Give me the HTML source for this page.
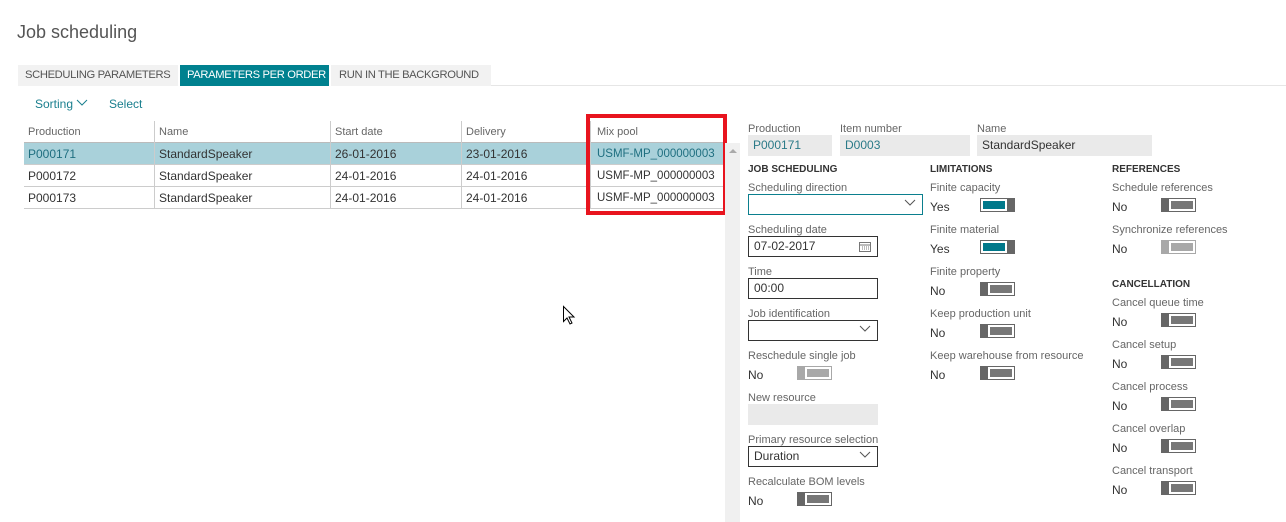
<!DOCTYPE html>
<html><head><meta charset="utf-8"><style>
*{margin:0;padding:0;box-sizing:border-box}
body{width:1286px;height:522px;background:#fff;font-family:"Liberation Sans",sans-serif;font-size:12px;color:#333;position:relative;overflow:hidden}
.a{position:absolute;white-space:nowrap;line-height:16px}
.lbl{color:#666;font-size:11px}
.h{font-weight:bold;font-size:10px;color:#333}
.tg{position:absolute;width:35px;height:14px;background:#666}
.tg i{position:absolute;top:1px;width:26px;height:12px;background:#fff}
.tg i b{position:absolute;left:2px;top:2px;width:22px;height:8px;background:#777}
.no i{left:8px}.yes i{left:1px}.yes i b{background:#00788a}
.dis{background:#a8a8a8}.dis i b{background:#a8a8a8}
.box{position:absolute;height:21px;border:1px solid #333;background:#fff;padding-left:5px;line-height:19px}
.gr{position:absolute;height:21px;background:#eaeaea;padding-left:5px;line-height:21px;color:#2a7a88}
.chev{position:absolute;right:6px;top:4px}
.row{position:absolute;left:24px;width:700px;height:22px;border-bottom:1px solid #ccc}
.cell{position:absolute;top:0;height:22px;line-height:23px;padding-left:4px;border-left:1px solid #ccc;overflow:hidden}
.cell:first-child{border-left:none}
.tab{position:absolute;top:65px;height:21px;line-height:21px;font-size:11.2px;letter-spacing:-0.35px;overflow:hidden;white-space:nowrap}
</style></head><body>
<div class="a" style="left:17px;top:20px;font-size:18px;line-height:24px;color:#555">Job scheduling</div>
<div class="tab" style="left:18px;width:160px;background:#f2f2f2;color:#555;padding-left:7px">SCHEDULING PARAMETERS</div>
<div class="tab" style="left:180px;width:149px;background:#00818f;color:#fff;padding-left:7px">PARAMETERS PER ORDER</div>
<div class="tab" style="left:331px;width:160px;background:#f2f2f2;color:#555;padding-left:8px">RUN IN THE BACKGROUND</div>
<div class="a" style="left:491px;top:85px;width:795px;height:1px;background:#e6e6e6"></div>
<div class="a" style="left:35px;top:96px;color:#1a7f8e">Sorting <svg width="12" height="8" style="vertical-align:1px"><path d="M1 1l5 5 5-5" stroke="#1a7f8e" fill="none"/></svg></div>
<div class="a" style="left:109px;top:96px;color:#1a7f8e">Select</div>

<div class="row" style="top:121px;height:22px;border-bottom:1px solid #bbb">
<div class="cell lbl" style="left:0;width:130px">Production</div>
<div class="cell lbl" style="left:130px;width:176px">Name</div>
<div class="cell lbl" style="left:306px;width:131px">Start date</div>
<div class="cell lbl" style="left:437px;width:129px">Delivery</div>
<div class="cell lbl" style="left:566px;width:134px;padding-left:6px">Mix pool</div>
</div>
<div class="row" style="top:143px;background:#a9d1da">
<div class="cell" style="left:0;width:130px;color:#1f6f80">P000171</div><div class="cell" style="left:130px;width:176px">StandardSpeaker</div><div class="cell" style="left:306px;width:131px">26-01-2016</div><div class="cell" style="left:437px;width:129px">23-01-2016</div><div class="cell" style="left:566px;width:134px;color:#1f6f80;padding-left:6px;font-size:11.5px">USMF-MP_000000003</div>
</div>
<div class="row" style="top:165px">
<div class="cell" style="left:0;width:130px">P000172</div><div class="cell" style="left:130px;width:176px">StandardSpeaker</div><div class="cell" style="left:306px;width:131px">24-01-2016</div><div class="cell" style="left:437px;width:129px">24-01-2016</div><div class="cell" style="left:566px;width:134px;padding-left:6px;font-size:11.5px">USMF-MP_000000003</div>
</div>
<div class="row" style="top:187px">
<div class="cell" style="left:0;width:130px">P000173</div><div class="cell" style="left:130px;width:176px">StandardSpeaker</div><div class="cell" style="left:306px;width:131px">24-01-2016</div><div class="cell" style="left:437px;width:129px">24-01-2016</div><div class="cell" style="left:566px;width:134px;padding-left:6px;font-size:11.5px">USMF-MP_000000003</div>
</div>
<div class="a" style="left:586px;top:114px;width:141px;height:101px;border:4px solid #e8141e"></div>
<div class="a" style="left:725px;top:143px;width:15px;height:379px;background:#f0f0f0"></div>
<svg class="a" style="left:728px;top:148px" width="10" height="6"><path d="M1 5l4-4 4 4z" fill="#aaa"/></svg>
<svg class="a" style="left:562px;top:305px" width="14" height="22"><path d="M1.5 1.5v15l3.5-3.5 3 6 2-1-3-6h5z" fill="#fff" stroke="#000"/></svg>

<div class="a lbl" style="left:748px;top:121px">Production</div>
<div class="a lbl" style="left:840px;top:121px">Item number</div>
<div class="a lbl" style="left:977px;top:121px">Name</div>
<div class="gr" style="left:748px;top:135px;width:84px">P000171</div>
<div class="gr" style="left:840px;top:135px;width:130px">D0003</div>
<div class="gr" style="left:977px;top:135px;width:175px;color:#333">StandardSpeaker</div>

<div class="a h" style="left:748px;top:162px">JOB SCHEDULING</div>
<div class="a lbl" style="left:748px;top:180px">Scheduling direction</div>
<div class="box" style="left:748px;top:194px;width:175px;border-color:#0b7f8e"><svg class="chev" width="12" height="8"><path d="M1 1l5 5 5-5" stroke="#555" fill="none"/></svg></div>
<div class="a lbl" style="left:748px;top:222px">Scheduling date</div>
<div class="box" style="left:748px;top:236px;width:130px">07-02-2017<svg class="chev" width="12" height="11" style="top:4px"><rect x=".5" y="1.5" width="11" height="9" fill="none" stroke="#777"/><path d="M1 4h10M3 6h1M5 6h1M7 6h1M9 6h1M3 8h1M5 8h1M7 8h1M9 8h1" stroke="#777"/></svg></div>
<div class="a lbl" style="left:748px;top:264px">Time</div>
<div class="box" style="left:748px;top:278px;width:130px">00:00</div>
<div class="a lbl" style="left:748px;top:306px">Job identification</div>
<div class="box" style="left:748px;top:320px;width:130px"><svg class="chev" width="12" height="8"><path d="M1 1l5 5 5-5" stroke="#555" fill="none"/></svg></div>
<div class="a lbl" style="left:748px;top:348px">Reschedule single job</div>
<div class="a" style="left:748px;top:367px">No</div><div class="tg no dis" style="left:797px;top:366px"><i><b></b></i></div>
<div class="a lbl" style="left:748px;top:390px">New resource</div>
<div class="a" style="left:748px;top:404px;width:130px;height:21px;background:#eaeaea"></div>
<div class="a lbl" style="left:748px;top:432px">Primary resource selection</div>
<div class="box" style="left:748px;top:446px;width:130px">Duration<svg class="chev" width="12" height="8"><path d="M1 1l5 5 5-5" stroke="#555" fill="none"/></svg></div>
<div class="a lbl" style="left:748px;top:474px">Recalculate BOM levels</div>
<div class="a" style="left:748px;top:493px">No</div><div class="tg no" style="left:797px;top:492px"><i><b></b></i></div>

<div class="a h" style="left:930px;top:162px">LIMITATIONS</div>
<div class="a lbl" style="left:930px;top:180px">Finite capacity</div>
<div class="a" style="left:930px;top:199px">Yes</div><div class="tg yes" style="left:980px;top:198px"><i><b></b></i></div>
<div class="a lbl" style="left:930px;top:222px">Finite material</div>
<div class="a" style="left:930px;top:241px">Yes</div><div class="tg yes" style="left:980px;top:240px"><i><b></b></i></div>
<div class="a lbl" style="left:930px;top:264px">Finite property</div>
<div class="a" style="left:930px;top:283px">No</div><div class="tg no" style="left:980px;top:282px"><i><b></b></i></div>
<div class="a lbl" style="left:930px;top:306px">Keep production unit</div>
<div class="a" style="left:930px;top:325px">No</div><div class="tg no" style="left:980px;top:324px"><i><b></b></i></div>
<div class="a lbl" style="left:930px;top:348px">Keep warehouse from resource</div>
<div class="a" style="left:930px;top:367px">No</div><div class="tg no" style="left:980px;top:366px"><i><b></b></i></div>

<div class="a h" style="left:1112px;top:162px">REFERENCES</div>
<div class="a lbl" style="left:1112px;top:180px">Schedule references</div>
<div class="a" style="left:1112px;top:199px">No</div><div class="tg no" style="left:1161px;top:198px"><i><b></b></i></div>
<div class="a lbl" style="left:1112px;top:222px">Synchronize references</div>
<div class="a" style="left:1112px;top:241px">No</div><div class="tg no dis" style="left:1161px;top:240px"><i><b></b></i></div>
<div class="a h" style="left:1112px;top:277px">CANCELLATION</div>
<div class="a lbl" style="left:1112px;top:295px">Cancel queue time</div>
<div class="a" style="left:1112px;top:314px">No</div><div class="tg no" style="left:1161px;top:313px"><i><b></b></i></div>
<div class="a lbl" style="left:1112px;top:337px">Cancel setup</div>
<div class="a" style="left:1112px;top:356px">No</div><div class="tg no" style="left:1161px;top:355px"><i><b></b></i></div>
<div class="a lbl" style="left:1112px;top:379px">Cancel process</div>
<div class="a" style="left:1112px;top:398px">No</div><div class="tg no" style="left:1161px;top:397px"><i><b></b></i></div>
<div class="a lbl" style="left:1112px;top:421px">Cancel overlap</div>
<div class="a" style="left:1112px;top:440px">No</div><div class="tg no" style="left:1161px;top:439px"><i><b></b></i></div>
<div class="a lbl" style="left:1112px;top:463px">Cancel transport</div>
<div class="a" style="left:1112px;top:482px">No</div><div class="tg no" style="left:1161px;top:481px"><i><b></b></i></div>
</body></html>
